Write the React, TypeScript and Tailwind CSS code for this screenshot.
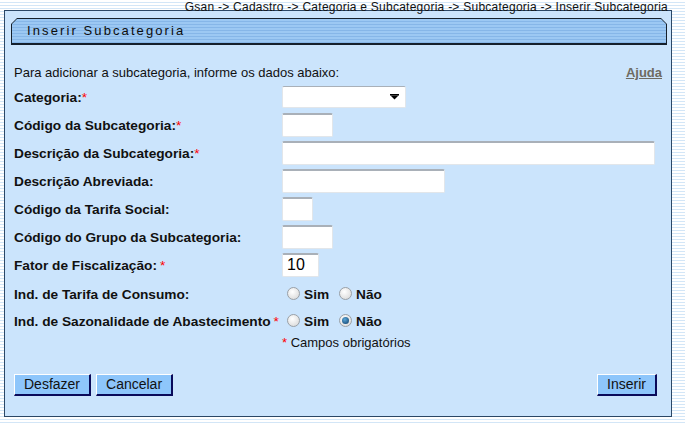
import React from "react";

const font = { fontFamily: '"Liberation Sans", Arial, sans-serif' };

function Label({ text, req, gap }: { text: string; req?: boolean; gap?: boolean }) {
  return (
    <span className="font-bold text-[13.7px] text-[#111]">
      {text}
      {req && <span className={`text-[#ff0000] font-normal ${gap ? "ml-[3px]" : ""}`}>*</span>}
    </span>
  );
}

function Field({ w, value }: { w: string; value?: string }) {
  return (
    <div
      className={`${w} h-[24px] bg-white rounded-[2px] border border-[#e2e6ea] border-t-[#a9b0b8] border-t-2 flex items-center px-[4px] text-[16px] text-black`}
    >
      {value}
    </div>
  );
}

function Radio({ checked }: { checked?: boolean }) {
  return (
    <span className="w-[13px] h-[13px] rounded-full border border-[#9aa0a6] bg-[radial-gradient(circle_at_40%_35%,#ffffff,#d4d4d4)] flex items-center justify-center">
      {checked && <span className="w-[7px] h-[7px] rounded-full bg-[radial-gradient(circle_at_40%_35%,#5aa6d8,#0b3b66)]" />}
    </span>
  );
}

function Btn({ children }: { children: React.ReactNode }) {
  return (
    <button className="h-[22px] px-[9px] bg-[#8ec6fb] border border-t-white border-l-white border-b-2 border-r-2 border-b-[#0a0a5a] border-r-[#0a0a5a] text-[14px] text-[#111] leading-none">
      {children}
    </button>
  );
}

const rows: { label: string; req?: boolean; gap?: boolean; w: string; value?: string; select?: boolean }[] = [
  { label: "Categoria:", req: true, w: "w-[124px]", select: true },
  { label: "Código da Subcategoria:", req: true, w: "w-[51px]" },
  { label: "Descrição da Subcategoria:", req: true, w: "w-[373px]" },
  { label: "Descrição Abreviada:", w: "w-[163px]" },
  { label: "Código da Tarifa Social:", w: "w-[31px]" },
  { label: "Código do Grupo da Subcategoria:", w: "w-[51px]" },
  { label: "Fator de Fiscalização:", req: true, gap: true, w: "w-[37px]", value: "10" },
];

export default function App() {
  return (
    <div
      style={font}
      className="w-[685px] h-[424px] overflow-hidden relative bg-[repeating-linear-gradient(to_bottom,#ffffff_0px,#ffffff_2px,#d3e6f7_2px,#d3e6f7_3px)]"
    >
      <div className="h-[14px] mb-[-4px] flex justify-end pr-[17px] text-[12px] leading-[14px] text-[#111] tracking-[0.25px]">
        Gsan -&gt; Cadastro -&gt; Categoria e Subcategoria -&gt; Subcategoria -&gt; Inserir Subcategoria
      </div>
      <div className="ml-[4px] w-[668px] h-[407px] border border-[#2b4766] bg-[#cbe4fc] flex flex-col">
        <div className="mt-[7px] ml-[6px] w-[656px] h-[27px] bg-[#15202c] p-[1px] pb-[2px] [clip-path:polygon(6px_0,calc(100%-6px)_0,100%_6px,100%_100%,0_100%,0_6px)]">
          <div className="w-full h-full [clip-path:polygon(5px_0,calc(100%-5px)_0,100%_5px,100%_100%,0_100%,0_5px)] bg-[repeating-linear-gradient(to_bottom,#9cc8f3_0px,#9cc8f3_2px,#86b6e8_2px,#86b6e8_3px)] flex items-center pl-[15px] text-[13px] tracking-[2.1px] text-[#0d0d0d]">
            Inserir Subcategoria
          </div>
        </div>

        <div className="mt-[18px] px-[9px] flex items-center justify-between text-[13px] text-[#111]">
          <span>Para adicionar a subcategoria, informe os dados abaixo:</span>
          <span className="font-bold underline text-[#6e6b62]">Ajuda</span>
        </div>

        <div className="px-[9px] flex flex-col">
          {rows.map((r) => (
            <div key={r.label} className="h-[28px] flex items-center">
              <div className="w-[268px]">
                <Label text={r.label} req={r.req} gap={r.gap} />
              </div>
              {r.select ? (
                <div className={`${r.w} h-[22px] bg-white rounded-[2px] border border-[#e2e6ea] border-t-[#a9b0b8] flex items-center justify-end pr-[6px]`}>
                  <svg width="9" height="6" viewBox="0 0 9 6">
                    <rect x="0" y="0" width="9" height="1.5" fill="#000" />
                    <polygon points="0.5,1.5 8.5,1.5 4.5,5.5" fill="#000" />
                  </svg>
                </div>
              ) : (
                <Field w={r.w} value={r.value} />
              )}
            </div>
          ))}

          <div className="h-[28px] flex items-center pt-[3px]">
            <div className="w-[268px]">
              <Label text="Ind. de Tarifa de Consumo:" />
            </div>
            <div className="flex items-center pl-[5px] font-bold text-[13.7px] text-[#111]">
              <Radio />
              <span className="ml-[4px] mt-[3px]">Sim</span>
              <span className="ml-[10px]"><Radio /></span>
              <span className="ml-[4px] mt-[3px]">Não</span>
            </div>
          </div>
          <div className="h-[27px] flex items-center pt-[1px]">
            <div className="w-[268px]">
              <Label text="Ind. de Sazonalidade de Abastecimento" req gap />
            </div>
            <div className="flex items-center pl-[5px] font-bold text-[13.7px] text-[#111]">
              <Radio />
              <span className="ml-[4px] mt-[3px]">Sim</span>
              <span className="ml-[10px]"><Radio checked /></span>
              <span className="ml-[4px] mt-[3px]">Não</span>
            </div>
          </div>
          <div className="mt-[1px] pl-[268px] text-[13px] text-[#111] leading-[16px]">
            <span className="text-[#ff0000]">*</span> Campos obrigatórios
          </div>
        </div>

        <div className="mt-[23px] px-[9px] flex items-center justify-between pr-[14px]">
          <div className="flex gap-[5px]">
            <Btn>Desfazer</Btn>
            <Btn>Cancelar</Btn>
          </div>
          <Btn>Inserir</Btn>
        </div>
      </div>
    </div>
  );
}
